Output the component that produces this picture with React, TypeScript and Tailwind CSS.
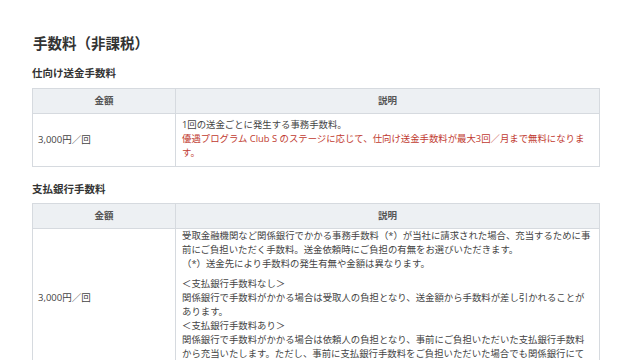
const jp = { fontFamily: '"Noto Sans CJK JP", "Noto Sans", sans-serif' };
const body = { fontFamily: '"Open Sans", "Noto Sans CJK JP", sans-serif' };

const rows1 = [
  { text: "1回の送金ごとに発生する事務手数料。", red: false },
  { text: "優遇プログラム Club S のステージに応じて、仕向け送金手数料が最大3回／月まで無料になりま", red: true },
  { text: "す。", red: true },
];

const para1 = [
  "受取金融機関など関係銀行でかかる事務手数料（*）が当社に請求された場合、充当するために事",
  "前にご負担いただく手数料。送金依頼時にご負担の有無をお選びいただきます。",
  "（*）送金先により手数料の発生有無や金額は異なります。",
];

const para2 = [
  "＜支払銀行手数料なし＞",
  "関係銀行で手数料がかかる場合は受取人の負担となり、送金額から手数料が差し引かれることが",
  "あります。",
  "＜支払銀行手数料あり＞",
  "関係銀行で手数料がかかる場合は依頼人の負担となり、事前にご負担いただいた支払銀行手数料",
  "から充当いたします。ただし、事前に支払銀行手数料をご負担いただいた場合でも関係銀行にて",
];

function FeeHead() {
  return (
    <thead>
      <tr className="bg-[#edf0f3] h-[25px]">
        <th className="border border-[#d6dadf] text-[9.5px] font-semibold text-[#555]">金額</th>
        <th className="border border-[#d6dadf] text-[9.5px] font-semibold text-[#555]">説明</th>
      </tr>
    </thead>
  );
}

export default function App() {
  return (
    <div className="bg-white w-[640px] h-[360px] overflow-hidden pl-[32px] pt-[33px] text-[#444]" style={jp}>
      <h1 className="text-[14.5px] leading-[20px] font-bold text-[#333] ml-[1px]">手数料（非課税）</h1>

      <h2 className="mt-[12px] text-[10.5px] leading-[16px] font-bold text-[#333]">仕向け送金手数料</h2>
      <table className="mt-[7px] w-[568px] table-fixed border-collapse" style={body}>
        <colgroup>
          <col className="w-[143px]" />
          <col />
        </colgroup>
        <FeeHead />
        <tbody>
          <tr>
            <td className="border border-[#d6dadf] px-[5px] text-[9.5px] align-middle">3,000円／回</td>
            <td className="border border-[#d6dadf] px-[6px] pt-[4px] pb-[6px] text-[9.4px] leading-[14px]">
              {rows1.map((r) => (
                <div key={r.text} className={`whitespace-nowrap ${r.red ? "text-[#bf3a30]" : ""}`}>
                  {r.text}
                </div>
              ))}
            </td>
          </tr>
        </tbody>
      </table>

      <h2 className="mt-[14px] text-[10.5px] leading-[16px] font-bold text-[#333]">支払銀行手数料</h2>
      <table className="mt-[6px] w-[568px] table-fixed border-collapse" style={body}>
        <colgroup>
          <col className="w-[143px]" />
          <col />
        </colgroup>
        <FeeHead />
        <tbody>
          <tr>
            <td className="border border-[#d6dadf] px-[5px] text-[9.5px] align-middle">3,000円／回</td>
            <td className="border border-[#d6dadf] px-[6px] pt-0 pb-[6px] text-[9.4px] leading-[14px]">
              <div className="mb-[6px]">
                {para1.map((l) => (
                  <div key={l} className="whitespace-nowrap">{l}</div>
                ))}
              </div>
              <div>
                {para2.map((l, i) => (
                  <div key={i} className="whitespace-nowrap">{l}</div>
                ))}
              </div>
            </td>
          </tr>
        </tbody>
      </table>
    </div>
  );
}
